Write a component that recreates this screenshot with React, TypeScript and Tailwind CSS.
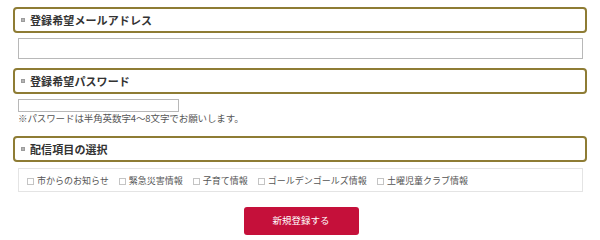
import React from "react";

const font = { fontFamily: '"Noto Sans CJK JP", "Noto Sans", sans-serif' };

function Heading({ children }: { children: React.ReactNode }) {
  return (
    <div className="h-[26px] rounded-[4px] border-2 border-[#8e7c34] bg-white flex items-center pl-[6px]">
      <span className="w-[4px] h-[4px] bg-[#b4b4b4] border border-[#9c9c9c] mr-[5px] shrink-0" />
      <span className="text-[11px] font-bold text-[#333] leading-none tracking-[0.1px]">{children}</span>
    </div>
  );
}

function Check({ label }: { label: string }) {
  return (
    <label className="flex items-center mr-[10px]">
      <span className="w-[7px] h-[7px] border border-[#c4c4c4] bg-white mr-[3px] mt-[2px]" />
      <span className="text-[9px] text-[#555] leading-none">{label}</span>
    </label>
  );
}

export default function App() {
  return (
    <div className="w-[600px] h-[238px] bg-white" style={font}>
      <div className="pt-[7px] pl-[13px] w-[587px]">
        <Heading>登録希望メールアドレス</Heading>
        <div className="mt-[5px] ml-[5px] mr-[4px] h-[21px] border border-[#b8b8b8] bg-white" />
        <div className="mt-[9px]">
          <Heading>登録希望パスワード</Heading>
        </div>
        <div className="mt-[5px] ml-[5px] w-[161px] h-[13px] border border-[#b8b8b8] bg-white" />
        <div className="ml-[5px] mt-[1px] text-[9.5px] leading-[11px] text-[#555] tracking-[-0.1px]">
          ※パスワードは半角英数字4～8文字でお願いします。
        </div>
        <div className="mt-[12px]">
          <Heading>配信項目の選択</Heading>
        </div>
        <div className="mt-[6px] ml-[5px] mr-[4px] h-[24px] border border-[#e4e4e4] bg-white flex items-center pl-[8px]">
          <Check label="市からのお知らせ" />
          <Check label="緊急災害情報" />
          <Check label="子育て情報" />
          <Check label="ゴールデンゴールズ情報" />
          <Check label="土曜児童クラブ情報" />
        </div>
        <div className="flex justify-center mt-[15px]">
          <button className="w-[115px] h-[28px] rounded-[3px] bg-[#c5103a] text-white text-[9.5px] leading-none ml-[2px]">
            新規登録する
          </button>
        </div>
      </div>
    </div>
  );
}
